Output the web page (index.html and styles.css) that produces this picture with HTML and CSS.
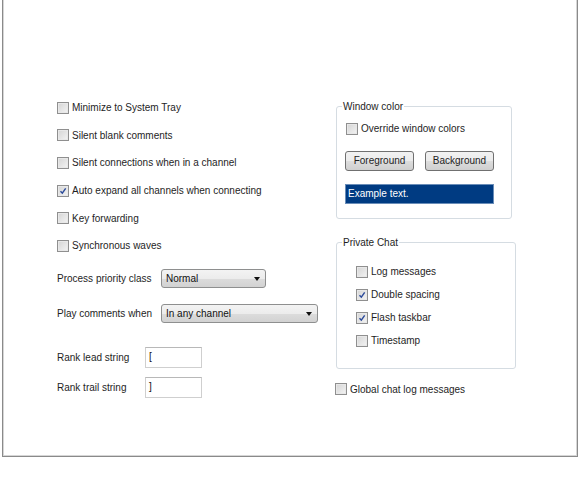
FILE: index.html
```html
<!DOCTYPE html>
<html lang="en">
<head>
    <meta charset="UTF-8">
    <title>Options</title>
    <link rel="stylesheet" href="styles.css">
</head>
<body>
    <div class="frame">
        <div class="left-col">
            <div class="check-row"><span class="box"></span>Minimize to System Tray</div>
            <div class="check-row"><span class="box"></span>Silent blank comments</div>
            <div class="check-row"><span class="box"></span>Silent connections when in a channel</div>
            <div class="check-row"><span class="box checked"><svg viewBox="0 0 12 12"><path d="M3 6.2 L5.2 8.6 L9.2 2.8"/></svg></span>Auto expand all channels when connecting</div>
            <div class="check-row"><span class="box"></span>Key forwarding</div>
            <div class="check-row"><span class="box"></span>Synchronous waves</div>

            <div class="field-row first">
                <span class="label">Process priority class</span>
                <div class="select short"><span>Normal</span><span class="arrow"></span></div>
            </div>
            <div class="field-row">
                <span class="label">Play comments when</span>
                <div class="select long"><span>In any channel</span><span class="arrow"></span></div>
            </div>

            <div class="rank-row first">
                <span class="label">Rank lead string</span>
                <div class="textbox">[</div>
            </div>
            <div class="rank-row">
                <span class="label">Rank trail string</span>
                <div class="textbox">]</div>
            </div>
        </div>

        <div class="right-col">
            <fieldset class="group wincolor">
                <legend>Window color</legend>
                <div class="check-row small override"><span class="box"></span>Override window colors</div>
                <div class="buttons">
                    <div class="btn">Foreground</div>
                    <div class="btn">Background</div>
                </div>
                <div class="example">Example text.</div>
            </fieldset>

            <fieldset class="group privchat">
                <legend>Private Chat</legend>
                <div class="chat-list">
                    <div class="chat-row"><span class="box"></span>Log messages</div>
                    <div class="chat-row"><span class="box checked"><svg viewBox="0 0 12 12"><path d="M3 6.2 L5.2 8.6 L9.2 2.8"/></svg></span>Double spacing</div>
                    <div class="chat-row"><span class="box checked"><svg viewBox="0 0 12 12"><path d="M3 6.2 L5.2 8.6 L9.2 2.8"/></svg></span>Flash taskbar</div>
                    <div class="chat-row"><span class="box"></span>Timestamp</div>
                </div>
            </fieldset>

            <div class="check-row small global"><span class="box"></span>Global chat log messages</div>
        </div>
    </div>
</body>
</html>
```

FILE: styles.css
```css
* {
    margin: 0;
    padding: 0;
    box-sizing: border-box;
}

body {
    font-family: 'Liberation Sans', Arial, sans-serif;
    font-size: 10px;
    color: #1e1e1e;
    background: #fff;
}

.frame {
    display: flex;
    margin-left: 2px;
    width: 576px;
    height: 457px;
    padding: 94px 0 0 54px;
    border: 1px solid #8a8a8a;
    border-top: none;
    box-shadow: inset 1px 0 #d6d6d6, inset -1px 0 #d6d6d6, inset 0 -1px #d6d6d6;
}

.left-col {
    width: 279px;
}

/* checkboxes */
.box {
    display: inline-flex;
    width: 12px;
    height: 12px;
    margin-right: 3px;
    border: 1px solid #8f8f8f;
    background: linear-gradient(135deg, #d4d4d4, #f4f4f4);
    box-shadow: inset 0 0 0 1px #e8e8e8;
    flex-shrink: 0;
}

.box svg {
    width: 10px;
    height: 10px;
}

.box svg path {
    fill: none;
    stroke: #2b4a9a;
    stroke-width: 1.7;
}

.check-row {
    display: flex;
    align-items: center;
    height: 27.6px;
}

.check-row.small {
    height: 16px;
}

/* combo rows */
.field-row {
    display: flex;
    align-items: center;
    height: 35px;
}

.field-row.first {
    margin-top: 1.5px;
}

.label {
    width: 104px;
    flex-shrink: 0;
}

.rank-row .label {
    width: 88px;
}

.select {
    position: relative;
    display: flex;
    align-items: center;
    height: 19px;
    padding-left: 4px;
    border: 1px solid #8e8f8f;
    border-radius: 3px;
    background: linear-gradient(#f3f3f3, #ececec 50%, #dcdcdc 51%, #d2d2d2);
    color: #111;
}

.select.short {
    width: 105px;
}

.select.long {
    width: 157px;
}

.arrow {
    position: absolute;
    right: 5px;
    top: 7px;
    border-left: 3.5px solid transparent;
    border-right: 3.5px solid transparent;
    border-top: 4px solid #111;
}

.rank-row {
    display: flex;
    align-items: center;
    height: 30px;
}

.rank-row.first {
    margin-top: 11.5px;
}

.textbox {
    width: 57px;
    height: 21px;
    padding: 3px 0 0 3px;
    border: 1px solid #cfcfcf;
    border-top-color: #b8b8b8;
    color: #111;
}

/* group boxes */
.group {
    border: 1px solid #d5dce2;
    border-radius: 3px;
    padding: 0;
}

.group legend {
    margin-left: 5px;
    padding: 0 1px;
    line-height: 13px;
}

.wincolor {
    width: 176px;
    margin-top: 5.5px;
    padding-bottom: 14px;
}

.override {
    margin: 8px 0 0 9px;
}

.buttons {
    display: flex;
    gap: 11px;
    margin: 14px 0 0 8px;
}

.btn {
    width: 69px;
    height: 20px;
    line-height: 18px;
    text-align: center;
    border: 1px solid #707070;
    border-radius: 3px;
    background: linear-gradient(#f2f2f2, #ebebeb 50%, #dddddd 51%, #cfcfcf);
}

.example {
    width: 149px;
    height: 20px;
    margin: 13px 0 0 8px;
    padding: 3px 0 0 2px;
    background: #003b82;
    border: 1px solid #6a8db8;
    color: #fff;
}

.privchat {
    width: 180px;
    margin-top: 17.5px;
    padding-bottom: 16px;
}

.chat-list {
    padding: 11px 0 0 19px;
}

.chat-row {
    display: flex;
    align-items: center;
    height: 23px;
}

.global {
    margin: 12px 0 0 -1px;
}
```
